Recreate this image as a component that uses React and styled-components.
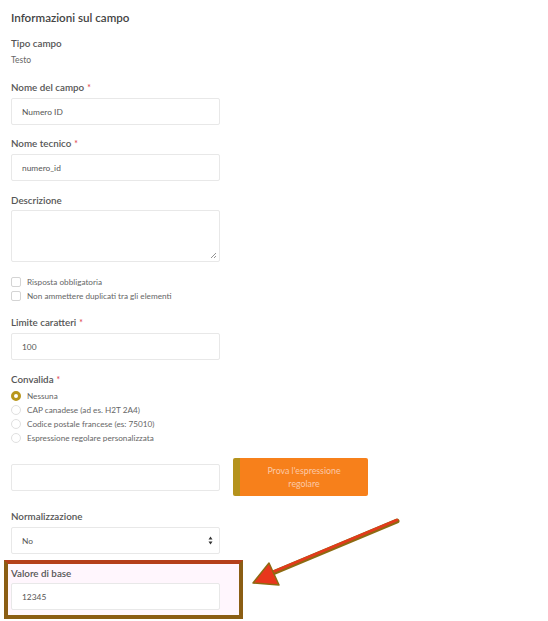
import React from 'react'
import styled, { createGlobalStyle } from 'styled-components'

const GlobalStyle = createGlobalStyle`
  body {
    margin: 0;
    background: #ffffff;
    font-family: Lato, "Noto Sans", "Liberation Sans", sans-serif;
    color: #555;
  }
  * { box-sizing: border-box; }
`

const Page = styled.div`
  position: relative;
  width: 548px;
  height: 621px;
  overflow: hidden;
  padding: 10px 0 0 11px;
`

const Title = styled.h2`
  margin: 0 0 10px;
  font-size: 11.6px;
  line-height: 16px;
  font-weight: 600;
  color: #444;
`

const Field = styled.div`
  margin-bottom: ${p => p.$gap ?? 12}px;
`

const Label = styled.div`
  font-size: 9.8px;
  line-height: 14px;
  font-weight: 600;
  color: #555;
  margin-bottom: ${p => p.$gap ?? 3}px;
`

const Star = styled.span`
  color: #e2505a;
  margin-left: 3px;
  font-size: 8.5px;
`

const Plain = styled.div`
  font-size: 8.5px;
  line-height: 14px;
  color: #666;
`

const Input = styled.div`
  display: flex;
  align-items: center;
  justify-content: space-between;
  width: 209px;
  height: ${p => p.$h ?? 27}px;
  border: 1px solid #e8e8e8;
  border-radius: 2px;
  background: #fff;
  padding: 0 6px 0 10px;
  font-size: 8.4px;
  color: #555;
  position: relative;
`

const Grip = styled.svg`
  position: absolute;
  right: 2px;
  bottom: 2px;
`

const Check = styled.div`
  display: flex;
  align-items: center;
  gap: 6px;
  height: 14px;
  font-size: 8.2px;
  color: #666;
`

const Box = styled.span`
  width: 10px;
  height: 10px;
  border: 1px solid #d4d4d4;
  border-radius: 2px;
`

const Dot = styled.span`
  width: 10px;
  height: 10px;
  border-radius: 50%;
  border: ${p => (p.$on ? '3px solid #b8961c' : '1px solid #e0e0e0')};
  background: #fff;
`

const Row = styled.div`
  display: flex;
  align-items: center;
  gap: 13px;
  margin-bottom: 13px;
`

const TryButton = styled.button`
  width: 135px;
  height: 38px;
  border: none;
  border-left: 7px solid #b5921c;
  border-radius: 2px;
  background: #f7801b;
  color: #fbc9a8;
  font-family: inherit;
  font-size: 8.8px;
  line-height: 13px;
  padding: 0 14px;
  text-align: center;
`

const Highlight = styled.div`
  margin-left: -7px;
  width: 239px;
  height: 59px;
  border: 4px solid #8b5e14;
  border-top-color: #b5401b;
  background: #fff6fd;
  padding: 2px 0 0 3px;
`

const Arrow = styled.svg`
  position: absolute;
  left: 0;
  top: 0;
  pointer-events: none;
`

function LabeledField({ label, required, children, gap, labelGap }) {
  return (
    <Field $gap={gap}>
      <Label $gap={labelGap}>
        {label}
        {required && <Star>*</Star>}
      </Label>
      {children}
    </Field>
  )
}

export default function App() {
  return (
    <>
      <GlobalStyle />
      <Page>
        <Title>Informazioni sul campo</Title>

        <Field $gap={13}>
          <Label $gap={3}>Tipo campo</Label>
          <Plain>Testo</Plain>
        </Field>

        <LabeledField label="Nome del campo" required gap={11}>
          <Input>Numero ID</Input>
        </LabeledField>

        <LabeledField label="Nome tecnico" required gap={12}>
          <Input>numero_id</Input>
        </LabeledField>

        <LabeledField label="Descrizione" gap={13}>
          <Input $h={52}>
            <Grip width="7" height="7" viewBox="0 0 7 7">
              <path d="M1 6 L6 1 M4 6 L6 4" stroke="#888" strokeWidth="0.9" />
            </Grip>
          </Input>
        </LabeledField>

        <Field $gap={12}>
          <Check><Box />Risposta obbligatoria</Check>
          <Check><Box />Non ammettere duplicati tra gli elementi</Check>
        </Field>

        <LabeledField label="Limite caratteri" required gap={12}>
          <Input>100</Input>
        </LabeledField>

        <Field $gap={13}>
          <Label $gap={2}>Convalida<Star>*</Star></Label>
          <Check><Dot $on />Nessuna</Check>
          <Check><Dot />CAP canadese (ad es. H2T 2A4)</Check>
          <Check><Dot />Codice postale francese (es: 75010)</Check>
          <Check><Dot />Espressione regolare personalizzata</Check>
        </Field>

        <Row>
          <Input />
          <TryButton>Prova l'espressione regolare</TryButton>
        </Row>

        <LabeledField label="Normalizzazione" gap={6} labelGap={4}>
          <Input>
            No
            <svg width="5" height="9" viewBox="0 0 5 9">
              <path d="M2.5 0.5 L4.5 3.5 L0.5 3.5 Z M2.5 8.5 L4.5 5.5 L0.5 5.5 Z" fill="#333" />
            </svg>
          </Input>
        </LabeledField>

        <Highlight>
          <Label $gap={3}>Valore di base</Label>
          <Input>12345</Input>
        </Highlight>

        <Arrow width="548" height="621" viewBox="0 0 548 621">
          <line x1="397" y1="521" x2="268" y2="575" stroke="#8d6a12" strokeWidth="5" strokeLinecap="round" />
          <line x1="397" y1="520" x2="268" y2="574" stroke="#e33a1c" strokeWidth="2.5" strokeLinecap="round" />
          <polygon points="253,583 269,563 279,585" fill="#e8361c" stroke="#8d6a12" strokeWidth="1.5" strokeLinejoin="round" />
        </Arrow>
      </Page>
    </>
  )
}
